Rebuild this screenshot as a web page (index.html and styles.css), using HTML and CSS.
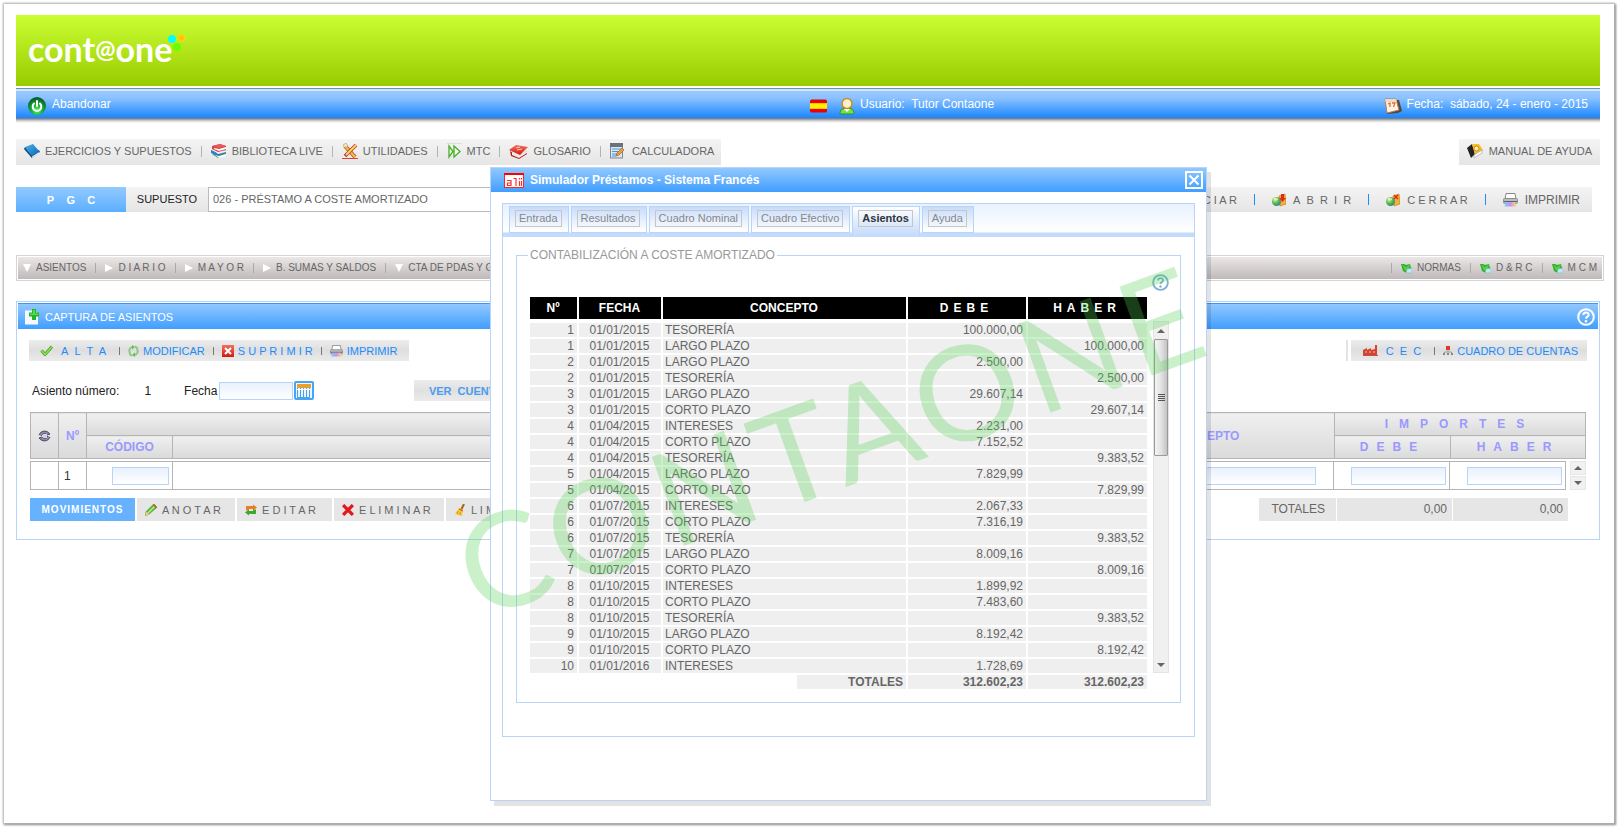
FILE: index.html
```html
<!DOCTYPE html>
<html lang="es">
<head>
<meta charset="utf-8">
<title>Contaone</title>
<link rel="stylesheet" href="styles.css">
</head>
<body>
<svg class="defs" aria-hidden="true">
  <defs>
    <radialGradient id="gPower" cx=".5" cy=".75" r=".7"><stop offset="0" stop-color="#4dff5c"/><stop offset=".5" stop-color="#16a535"/><stop offset="1" stop-color="#075c2a"/></radialGradient>
    <linearGradient id="gBlue" x1="0" y1="0" x2="1" y2="1"><stop offset="0" stop-color="#44b4ee"/><stop offset="1" stop-color="#1268b4"/></linearGradient>
    <linearGradient id="gInk"><stop offset="0" stop-color="#6ad5f5"/><stop offset=".5" stop-color="#d38cf0"/><stop offset="1" stop-color="#ffe16b"/></linearGradient>
    <linearGradient id="gRed" x1="0" y1="0" x2="0" y2="1"><stop offset="0" stop-color="#f0705e"/><stop offset="1" stop-color="#d4190f"/></linearGradient>
    <radialGradient id="gGlobe" cx=".35" cy=".3" r=".8"><stop offset="0" stop-color="#d9f6b4"/><stop offset=".5" stop-color="#62b840"/><stop offset="1" stop-color="#1b78b8"/></radialGradient>
  </defs>
  <symbol id="power" viewBox="0 0 18 18"><circle cx="9" cy="9" r="9" fill="url(#gPower)"/><path d="M6 6.500a4.300 4.300 0 1 0 6 0" fill="none" stroke="#fff" stroke-width="2" stroke-linecap="round"/><path d="M9 4v5" stroke="#fff" stroke-width="2" stroke-linecap="round"/></symbol>
  <symbol id="flag" viewBox="0 0 18 14"><rect width="18" height="14" rx="2" fill="#e00"/><rect y="4" width="18" height="6" fill="#fff000"/></symbol>
  <symbol id="user" viewBox="0 0 16 18"><path d="M1 17c0-5 3-6 7-6s7 1 7 6z" fill="#7ddc4a" stroke="#1e9a28"/><path d="M5 12l3 3 3-3z" fill="#fff"/><circle cx="8" cy="6.500" r="5" fill="#fdf0cc" stroke="#c98c22" stroke-width="1.500"/></symbol>
  <symbol id="calday" viewBox="0 0 18 18"><path d="M4 3l11 0 3 11-4 2L3 17z" fill="#56473e"/><path d="M1 2l11 0 3 11-12 3z" fill="#fff3e6" stroke="#b27c55"/><path d="M1 2l11 0 1 3H1.500z" fill="#e8dccf"/><path d="M4 7l2-1v4M8 6h3L9.500 10" fill="none" stroke="#e86b28" stroke-width="1.300"/></symbol>
  <symbol id="book" viewBox="0 0 16 16"><path d="M0 5l8 10 8-6-1-2-8 5z" fill="#135c9f"/><path d="M2 8l6 5.500L15 9v1.500L8 15z" fill="#d7e8f3"/><path d="M1 4L9 1l6 7-7 5z" fill="url(#gBlue)"/><path d="M1 4l7 9v2L0 6z" fill="#0e4d8b"/></symbol>
  <symbol id="books" viewBox="0 0 16 16"><path d="M1 11l6 4 8-3V9z" fill="#37a06b"/><path d="M3 11l5 2 7-2v2l-7 2z" fill="#fff"/><path d="M0 7l7 3 8-3v3l-8 3-7-3z" fill="#2f7fc4"/><path d="M2 7l5 2 8-2v2l-8 2z" fill="#eee"/><path d="M1 3l8-2 6 2v4L7 9 1 6z" fill="#dc4045"/><path d="M3 5l5 1 7-2v2L8 8 3 6z" fill="#fff"/><path d="M2 3l7-2 6 2-7 2z" fill="#e7595b"/></symbol>
  <symbol id="tools" viewBox="0 0 16 16"><path d="M3 3l10 11" stroke="#a55b1a" stroke-width="4"/><path d="M2.500 2.500L13 14" stroke="#f4b655" stroke-width="2.500"/><path d="M14 2L3 13" stroke="#b63a28" stroke-width="3.500"/><path d="M14 2L4 12" stroke="#ffcf67" stroke-width="2"/><path d="M1 2l3-2 2 3-3 2z" fill="#f4e4c4" stroke="#b98140" stroke-width=".500"/><path d="M0 15.500h16" stroke="#e43b3b"/></symbol>
  <symbol id="ffwd" viewBox="0 0 15 16"><path d="M0 .500h15" stroke="#ddd"/><path d="M2 3v11l4-5.500zM7 3v11l6-5.500z" fill="#f3ffe9" stroke="#45ad27" stroke-width="1.300"/></symbol>
  <symbol id="redbook" viewBox="0 0 19 16"><path d="M1 8l9 6 8-6v3l-8 5-8-3z" fill="#b81d1d"/><path d="M3 9l7 4 8-5v2l-8 5-7-3z" fill="#f1eaea"/><path d="M0 7l7-5 12 2-8 8z" fill="url(#gRed)"/><path d="M7 5l4-1M8 7l5-1" stroke="#ffc7be"/></symbol>
  <symbol id="calc" viewBox="0 0 14 16"><rect x=".5" y=".5" width="12" height="14.500" fill="#d8e7f5" stroke="#7a8795"/><rect x="0" y="0" width="13" height="4" fill="#68727c"/><path d="M2 6h9M2 8.500h9M2 11h6M2 13h4" stroke="#5c91d0"/><path d="M6 13l1-3 5-5 2 2-5 5z" fill="#eda13f" stroke="#9f5d1b" stroke-width=".700"/></symbol>
  <symbol id="manual" viewBox="0 0 16 16"><path d="M0 5l5-4 3 10-4 4z" fill="#222"/><path d="M5 1l7 0 4 6-8 5z" fill="#f7be2e"/><path d="M7 12l8-5v3l-8 5z" fill="#fff" stroke="#888" stroke-width=".5"/><circle cx="9.500" cy="5.500" r="2.500" fill="#fff1b8" stroke="#c88400"/></symbol>
  <symbol id="globe" viewBox="0 0 14 14"><path d="M7 3l6-2 1 10-6 2z" fill="#f5b12f" stroke="#b87812" stroke-width=".6"/><circle cx="4.500" cy="8.500" r="4.500" fill="url(#gGlobe)"/><path d="M2 6c2-1 3 1 4 0" stroke="#fff" fill="none"/></symbol>
  <symbol id="globe-open" viewBox="0 0 14 14"><use href="#globe" width="14" height="14"/><path d="M9 1h3v4h2l-3.500 4L7 5h2z" fill="#e02b1c"/></symbol>
  <symbol id="globe-close" viewBox="0 0 14 14"><use href="#globe" width="14" height="14"/><path d="M8 2l4 4M12 2L8 6" stroke="#e02b1c" stroke-width="1.500"/></symbol>
  <symbol id="printer" viewBox="0 0 15 14"><path d="M3 .500h9l1 6H2z" fill="#fff" stroke="#888"/><rect x=".5" y="5.500" width="14" height="5" rx="1" fill="#b9bdc2" stroke="#8c9196"/><path d="M1 8.500h13" stroke="#5d6267"/><path d="M3 9h9l1.500 4.500h-12z" fill="url(#gInk)"/></symbol>
  <symbol id="flagmap" viewBox="0 0 11 11"><path d="M0 1h3l2 1 4-1 1 4-1 3-4 1.500L2 8z" fill="#2eaa2a"/><path d="M1 1l4 3 4-3-1 4-4 3z" fill="#4fd23d"/><path d="M6 6l5-1v5H5z" fill="#bfe8f3" stroke="#76b4c8" stroke-width=".6"/></symbol>
  <symbol id="newdoc" viewBox="0 0 14 16"><path d="M0 1.500h10L13 5v10.500H0z" fill="#f6faff"/><path d="M7 0h4v3.500h3v4h-3V11H7V7.500H4v-4h3z" fill="#20b52a"/><path d="M8 1h2v3.500h3v1.500H5V4.500h3z" fill="#59da4e"/></symbol>
  <symbol id="check" viewBox="0 0 13 11"><path d="M1.500 5.500l3.500 4 7-8" fill="none" stroke="#3f9f1d" stroke-width="3"/><path d="M1.500 5.500l3.500 4 7-8" fill="none" stroke="#97df59" stroke-width="1.500"/></symbol>
  <symbol id="refresh" viewBox="0 0 11 12"><path d="M2 8C0 4 3 2 5 2M9 4c2 4-1 6-3 6M7 1.500C9 2 9 3 9.500 4M4 10.500C2 10 2 9 1.500 8" fill="none" stroke="#8bcb7c" stroke-width="2"/><path d="M4 0l3 2-3 2.500zM7 7.500V12L4 10z" fill="#69ba59"/></symbol>
  <symbol id="redx" viewBox="0 0 12 12"><rect width="12" height="12" fill="url(#gRed)"/><path d="M3 3l6 6M9 3L3 9" stroke="#fff" stroke-width="2"/></symbol>
  <symbol id="factory" viewBox="0 0 15 11"><path d="M0 10V5l4-2v2l4-2v2l4-1V0h2v10z" fill="#d34431"/><path d="M2 7h2M6 7h2M10 7h2" stroke="#ffb9a6"/><path d="M0 10.500h15" stroke="#b5574b"/></symbol>
  <symbol id="tree" viewBox="0 0 10 9"><rect x="3" y="0" width="4" height="4" fill="#e3342c"/><path d="M5 4v2M1.500 7V6h7v1" stroke="#999" fill="none"/><path d="M0 7h2v2H0zM4 7h2v2H4zM8 7h2v2H8z" fill="#888"/></symbol>
  <symbol id="cal" viewBox="0 0 20 19"><rect x="1" y="1" width="18" height="17" rx="1" fill="#eaf6ff" stroke="#45a5f8" stroke-width="2"/><path d="M3 3h14v4H3z" fill="#e9a02d"/><path d="M3.500 7v9M6.500 7v9M9.500 7v9M12.500 7v9M15.500 7v9M3 16.500h13" stroke="#4aa1e8"/><path d="M3 8.500h13" stroke="#fff"/></symbol>
  <symbol id="spin" viewBox="0 0 13 12"><path d="M1 5c2-5 8-5 11-1l-3 1c-2-2-4-2-6 1M12 7c-2 5-8 5-11 1l3-1c2 2 4 2 6-1" fill="#8e8aa8" stroke="#4b475f"/><path d="M5 4h4v4H5z" fill="#d4d1e2"/></symbol>
  <symbol id="pencil" viewBox="0 0 11 11"><path d="M0 11l1-4 7-7 3 3-7 6z" fill="#56b93a" stroke="#377f24" stroke-width=".5"/><path d="M2 8l6-6 1 1-6 6z" fill="#b7ed82"/><path d="M7.500.5L8.500 0 11 3l-1 .7z" fill="#ea4c2a"/><path d="M0 11l1-4 2.500 2.500z" fill="#f5cd85"/></symbol>
  <symbol id="edit" viewBox="0 0 12 11"><path d="M1 6V1.500h7V0l4 3-4 3V4.500H4V6z" fill="#eb7d29"/><path d="M11 5v4.500H4V11L0 8l4-3v1.500h4V5z" fill="#3eaa2d"/></symbol>
  <symbol id="cross" viewBox="0 0 11 11"><path d="M1 1l9 9M10 1L1 10" stroke="#e3181b" stroke-width="3"/></symbol>
  <symbol id="broom" viewBox="0 0 10 12"><path d="M9 0L6 6" stroke="#a8641c" stroke-width="2"/><path d="M4 4l4 2-1 6-7-2z" fill="#f5c738"/><path d="M4 5l4 2" stroke="#d34a20"/><path d="M3 7l-1 3M5 8v3" stroke="#bd8b16" stroke-width=".7"/></symbol>
  <symbol id="help" viewBox="0 0 18 18"><circle cx="9" cy="9" r="7.800" fill="none" stroke="currentColor" stroke-width="2"/><path d="M6.300 7c0-3.500 5.600-3.400 5.400-.1C11.600 8.700 9 8.500 9 10.700" fill="none" stroke="currentColor" stroke-width="2"/><circle cx="9" cy="13.300" r="1.300" fill="currentColor"/></symbol>
  <symbol id="close" viewBox="0 0 18 18"><rect x="1" y="1" width="16" height="16" fill="none" stroke="#fff" stroke-width="2"/><path d="M4.500 4.500l9 9M13.500 4.500l-9 9" stroke="#fff" stroke-width="2"/></symbol>
  <symbol id="app" viewBox="0 0 20 15"><rect x=".5" y=".5" width="19" height="14" fill="#fff" stroke="#f22"/><path d="M0 1h20" stroke="#f00" stroke-width="2"/><path d="M3 7.500h4v5H3.500V10H7M9.500 5.500H12V13M15.500 8v5M17.500 8v5M15.500 5v1.500M17.500 5v1.500" fill="none" stroke="#e33" stroke-width="1.200"/></symbol>
</svg>

<div class="page">
  <header class="banner">
    <div class="logo">cont<span class="logo-at">@</span>one<svg class="dots" viewBox="0 0 20 18"><circle cx="5" cy="6" r="4" fill="#0ff"/><circle cx="14.500" cy="5" r="3.500" fill="#ffc800" stroke="#ffd93b" stroke-dasharray="2 1"/><circle cx="10" cy="14" r="4" fill="#6f0"/></svg></div>
  </header>

  <div class="userbar">
    <a class="quit" href="#"><svg class="i18"><use href="#power"/></svg><span>Abandonar</span></a>
    <div class="who"><svg class="flag"><use href="#flag"/></svg><svg class="i16x18"><use href="#user"/></svg><span>Usuario:&nbsp; Tutor Contaone</span></div>
    <div class="date"><svg class="i18"><use href="#calday"/></svg><span>Fecha:&nbsp; sábado, 24 - enero - 2015</span></div>
  </div>

  <div class="row tools-row">
    <nav class="bar mainbar">
      <a href="#"><svg class="i16"><use href="#book"/></svg>EJERCICIOS Y SUPUESTOS</a><i></i>
      <a href="#"><svg class="i16"><use href="#books"/></svg>BIBLIOTECA LIVE</a><i></i>
      <a href="#"><svg class="i16"><use href="#tools"/></svg>UTILIDADES</a><i></i>
      <a href="#"><svg class="i15x16"><use href="#ffwd"/></svg>MTC</a><i></i>
      <a href="#"><svg class="i19"><use href="#redbook"/></svg>GLOSARIO</a><i></i>
      <a href="#" class="wide"><svg class="i14x16"><use href="#calc"/></svg>CALCULADORA</a>
    </nav>
    <nav class="bar manualbar"><a href="#"><svg class="i16"><use href="#manual"/></svg>MANUAL DE AYUDA</a></nav>
  </div>

  <div class="row case-row">
    <button class="pgc" type="button">P&nbsp;&nbsp;&nbsp; G&nbsp;&nbsp;&nbsp; C</button>
    <label class="case-label" for="case">SUPUESTO</label>
    <input class="case-input" id="case" value="026 - PRÉSTAMO A COSTE AMORTIZADO">
    <nav class="bar actions">
      <a href="#">I N I C I A R</a><i></i>
      <a href="#"><svg class="i14"><use href="#globe-open"/></svg>A&nbsp; B&nbsp; R&nbsp; I&nbsp; R</a><i></i>
      <a href="#"><svg class="i14"><use href="#globe-close"/></svg>C E R R A R</a><i></i>
      <a href="#" class="print"><svg class="i15"><use href="#printer"/></svg>IMPRIMIR</a>
    </nav>
  </div>

  <nav class="menu"><div class="menu-in">
    <a href="#"><b class="down"></b>ASIENTOS</a><i></i>
    <a href="#"><b class="right"></b>D I A R I O</a><i></i>
    <a href="#"><b class="right"></b>M A Y O R</a><i></i>
    <a href="#"><b class="right"></b>B. SUMAS Y SALDOS</a><i></i>
    <a href="#"><b class="down"></b>CTA DE PDAS Y G</a>
    <span class="grow"></span><i></i>
    <a href="#"><svg class="i11"><use href="#flagmap"/></svg>NORMAS</a><i></i>
    <a href="#"><svg class="i11"><use href="#flagmap"/></svg>D &amp; R C</a><i></i>
    <a href="#"><svg class="i11"><use href="#flagmap"/></svg>M C M</a>
  </div></nav>

  <section class="panel">
    <div class="panel-title"><svg class="i14x16"><use href="#newdoc"/></svg><span>CAPTURA DE ASIENTOS</span><button type="button" class="icon-btn" aria-label="Ayuda"><svg class="i18"><use href="#help"/></svg></button></div>
    <div class="panel-body">
      <div class="row">
        <div class="cmds cmds-left">
          <a href="#"><svg class="i13x11"><use href="#check"/></svg><span class="padded">A&nbsp; L&nbsp; T&nbsp; A</span></a><i></i>
          <a href="#"><svg class="i11x12"><use href="#refresh"/></svg>MODIFICAR</a><i></i>
          <a href="#"><svg class="i12"><use href="#redx"/></svg>S U P R I M I R</a><i></i>
          <a href="#"><svg class="i13"><use href="#printer"/></svg>IMPRIMIR</a>
        </div>
        <div class="row cmds-end"><span class="sliver"></span>
        <div class="cmds cmds-right">
          <a href="#"><svg class="i15x11"><use href="#factory"/></svg><span class="padded">C&nbsp; E&nbsp; C</span></a><i></i>
          <a href="#"><svg class="i10x9"><use href="#tree"/></svg>CUADRO DE CUENTAS</a>
        </div></div>
      </div>
      <div class="entry-row">
        <span>Asiento número:</span><span class="num">1</span>
        <label for="fecha">Fecha</label><input id="fecha" class="field date-field"><button type="button" class="icon-btn" aria-label="Calendario"><svg class="cal"><use href="#cal"/></svg></button>
        <button type="button" class="see">VER&nbsp; CUENTAS</button>
      </div>

      <table class="grid head">
        <colgroup><col class="c28"><col class="c28"><col class="c86"><col><col class="c258"><col class="c116"><col class="c135"></colgroup>
        <tr><th rowspan="2"><svg class="i13"><use href="#spin"/></svg></th><th rowspan="2">Nº</th><th colspan="2"></th><th rowspan="2">CONCEPTO</th><th colspan="2" class="sp11">IMPORTES</th></tr>
        <tr><th>CÓDIGO</th><th></th><th class="sp8">DEBE</th><th class="sp8">HABER</th></tr>
      </table>
      <div class="line-row">
        <table class="grid line">
          <colgroup><col class="c28"><col class="c28"><col class="c86"><col><col class="c258"><col class="c116"><col class="c116"></colgroup>
          <tr><td></td><td class="n">1</td><td><input class="field f57" aria-label="Código"></td><td></td><td class="concept"><input class="field f230" aria-label="Concepto"></td><td><input class="field f95" aria-label="Debe"></td><td><input class="field f95" aria-label="Haber"></td></tr>
        </table>
        <div class="updown"><button type="button" aria-label="Subir"><b class="tri-up"></b></button><button type="button" aria-label="Bajar"><b class="tri-dn"></b></button></div>
      </div>
      <div class="foot">
        <div class="moves">
          <button type="button" class="mov">MOVIMIENTOS</button>
          <button type="button" class="act w98"><svg class="i12"><use href="#pencil"/></svg>A N O T A R</button>
          <button type="button" class="act w95"><svg class="i12"><use href="#edit"/></svg>E D I T A R</button>
          <button type="button" class="act w110"><svg class="i12"><use href="#cross"/></svg>E L I M I N A R</button>
          <button type="button" class="act w98"><svg class="i12"><use href="#broom"/></svg>L I M P I A R</button>
        </div>
        <div class="totals"><span class="w77">TOTALES</span><span class="w115">0,00</span><span class="w115">0,00</span></div>
      </div>
    </div>
  </section>
</div>

<section class="dialog" role="dialog" aria-label="Simulador Préstamos">
  <div class="dlg-title"><svg class="app"><use href="#app"/></svg><h2>Simulador Préstamos - Sistema Francés</h2><button type="button" class="icon-btn" aria-label="Cerrar"><svg class="i18"><use href="#close"/></svg></button></div>
  <div class="tabbox">
    <div class="tabs">
      <div class="tab"><button type="button">Entrada</button></div>
      <div class="tab"><button type="button">Resultados</button></div>
      <div class="tab"><button type="button">Cuadro Nominal</button></div>
      <div class="tab"><button type="button">Cuadro Efectivo</button></div>
      <div class="tab on"><button type="button">Asientos</button></div>
      <div class="tab"><button type="button">Ayuda</button></div>
    </div>
    <fieldset>
      <legend>CONTABILIZACIÓN A COSTE AMORTIZADO</legend>
      <div class="help-row"><button type="button" class="icon-btn help" aria-label="Ayuda"><svg class="i17"><use href="#help"/></svg></button></div>
      <div class="list">
        <table class="data">
          <colgroup><col class="k47"><col class="k82"><col><col class="k118"><col class="k119"></colgroup>
          <thead><tr><th>Nº</th><th>FECHA</th><th>CONCEPTO</th><th class="sp5">DEBE</th><th class="sp5">HABER</th></tr></thead>
          <tbody>
            <tr><td>1</td><td>01/01/2015</td><td>TESORERÍA</td><td>100.000,00</td><td></td></tr>
            <tr><td>1</td><td>01/01/2015</td><td>LARGO PLAZO</td><td></td><td>100.000,00</td></tr>
            <tr><td>2</td><td>01/01/2015</td><td>LARGO PLAZO</td><td>2.500,00</td><td></td></tr>
            <tr><td>2</td><td>01/01/2015</td><td>TESORERÍA</td><td></td><td>2.500,00</td></tr>
            <tr><td>3</td><td>01/01/2015</td><td>LARGO PLAZO</td><td>29.607,14</td><td></td></tr>
            <tr><td>3</td><td>01/01/2015</td><td>CORTO PLAZO</td><td></td><td>29.607,14</td></tr>
            <tr><td>4</td><td>01/04/2015</td><td>INTERESES</td><td>2.231,00</td><td></td></tr>
            <tr><td>4</td><td>01/04/2015</td><td>CORTO PLAZO</td><td>7.152,52</td><td></td></tr>
            <tr><td>4</td><td>01/04/2015</td><td>TESORERÍA</td><td></td><td>9.383,52</td></tr>
            <tr><td>5</td><td>01/04/2015</td><td>LARGO PLAZO</td><td>7.829,99</td><td></td></tr>
            <tr><td>5</td><td>01/04/2015</td><td>CORTO PLAZO</td><td></td><td>7.829,99</td></tr>
            <tr><td>6</td><td>01/07/2015</td><td>INTERESES</td><td>2.067,33</td><td></td></tr>
            <tr><td>6</td><td>01/07/2015</td><td>CORTO PLAZO</td><td>7.316,19</td><td></td></tr>
            <tr><td>6</td><td>01/07/2015</td><td>TESORERÍA</td><td></td><td>9.383,52</td></tr>
            <tr><td>7</td><td>01/07/2015</td><td>LARGO PLAZO</td><td>8.009,16</td><td></td></tr>
            <tr><td>7</td><td>01/07/2015</td><td>CORTO PLAZO</td><td></td><td>8.009,16</td></tr>
            <tr><td>8</td><td>01/10/2015</td><td>INTERESES</td><td>1.899,92</td><td></td></tr>
            <tr><td>8</td><td>01/10/2015</td><td>CORTO PLAZO</td><td>7.483,60</td><td></td></tr>
            <tr><td>8</td><td>01/10/2015</td><td>TESORERÍA</td><td></td><td>9.383,52</td></tr>
            <tr><td>9</td><td>01/10/2015</td><td>LARGO PLAZO</td><td>8.192,42</td><td></td></tr>
            <tr><td>9</td><td>01/10/2015</td><td>CORTO PLAZO</td><td></td><td>8.192,42</td></tr>
            <tr><td>10</td><td>01/01/2016</td><td>INTERESES</td><td>1.728,69</td><td></td></tr>
          </tbody>
          <tfoot><tr><td colspan="3" class="tot"><span>TOTALES</span></td><td>312.602,23</td><td>312.602,23</td></tr></tfoot>
        </table>
        <div class="scroll"><b class="tri-up"></b><div class="thumb"><span></span><span></span><span></span><span></span></div><b class="tri-dn"></b></div>
      </div>
    </fieldset>
  </div>
</section>
<div class="watermark">CONTAONE</div>
</body>
</html>
```
FILE: styles.css
```css
* { box-sizing: border-box; }
html, body { height: 100%; }
body {
  margin: 0;
  padding: 4px 5px 5px 4px;
  position: relative;
  overflow: hidden;
  background: #fff;
  color: #666;
  font: 11px/14px "Liberation Sans", Arial, sans-serif;
}
a { color: inherit; text-decoration: none; white-space: nowrap; }
button, input { font: inherit; color: inherit; margin: 0; }
button { border: 0; background: none; padding: 0; white-space: nowrap; }
svg { display: block; flex: none; }
.defs { position: absolute; width: 0; height: 0; }
.i18 { width: 18px; height: 18px; }
.i17 { width: 17px; height: 17px; }
.i16 { width: 16px; height: 16px; }
.i15 { width: 15px; height: 14px; }
.i14 { width: 14px; height: 14px; }
.i13 { width: 13px; height: 12px; }
.i12 { width: 12px; height: 12px; }
.i11 { width: 11px; height: 11px; }
.i19 { width: 19px; height: 16px; }
.i16x18 { width: 16px; height: 18px; }
.i15x16 { width: 15px; height: 16px; }
.i14x16 { width: 14px; height: 16px; }
.i13x11 { width: 13px; height: 11px; }
.i11x12 { width: 11px; height: 12px; }
.i15x11 { width: 15px; height: 11px; }
.i10x9 { width: 10px; height: 9px; }
.flag { width: 17px; height: 14px; }
.app { width: 20px; height: 15px; }
.cal { width: 20px; height: 19px; }

.page {
  height: 100%;
  padding: 11px 14px 0 12px;
  background: #fff;
  box-shadow: 0 0 2px 1px #bbb, 1px 1px 2px 1px #888;
}
.banner {
  height: 71px;
  padding-left: 12px;
  background: linear-gradient(#cf3, #9c0);
}
.logo {
  display: flex;
  align-items: center;
  height: 68px;
  color: #fff;
  font: bold 34px/68px Lato, sans-serif;
}
.logo-at { font-size: 24px; }
.dots { width: 20px; height: 18px; margin: 0 0 14px -5px; }

.userbar {
  display: flex;
  align-items: center;
  margin-top: 2px;
  height: 35px;
  padding: 0 12px;
  color: #fff;
  font-size: 12px;
  background: linear-gradient(#5a96c3 0 1px, #d5e6f5 1px 3px, #99c9ff 3px, #8cc2ff 10px, #248cff 28px, #3b7fca 30px, #8e9196 31px, #d9d9d9 33px, #fff 35px);
}
.userbar > * { display: flex; align-items: center; }
.userbar span { padding-bottom: 3px; }
.quit { width: 50%; gap: 6px; }
.who { flex: 1; gap: 5px; padding-left: 2px; }
.who .flag { margin-right: 7px; }
.date { gap: 5px; }

.row { display: flex; justify-content: space-between; align-items: center; }
.tools-row { margin-top: 16px; }
.bar {
  display: flex;
  align-items: center;
  background: linear-gradient(#f4f4f4, #e5e5e5);
}
.bar a { display: flex; align-items: center; gap: 5px; }
.bar i { width: 1px; height: 11px; background: #b3b3b3; }
.mainbar { height: 26px; gap: 9px; padding: 0 7px 2px 8px; }
.mainbar .wide { gap: 8px; }
.manualbar { height: 26px; padding: 0 8px 2px; }
.manualbar a { gap: 6px; }

.case-row { margin: 22px 8px 0 0; height: 25px; align-items: stretch; }
.pgc { width: 110px; color: #fff; font-weight: bold; background: linear-gradient(#92caff, #5caeff); }
.case-label { width: 82px; line-height: 25px; text-align: center; color: #222; background: linear-gradient(#f4f4f4, #e5e5e5); }
.case-input { flex: 1; min-width: 0; padding: 0 4px 2px; background: #fff; border: 1px solid #bbb; }
.actions { gap: 17px; padding: 0 12px 0 16px; }
.actions a { gap: 7px; }
.actions i { background: #1a8cff; }
.actions .print { font-size: 12px; }

.menu { margin: 43px -4px 0 0; padding: 1px; border: 1px solid #d4d4d4; }
.menu-in {
  display: flex;
  align-items: center;
  gap: 9px;
  height: 22px;
  padding: 0 5px;
  font-size: 10px;
  background: linear-gradient(#ebe7e6, #bfbab9);
}
.menu a { display: flex; align-items: center; gap: 5px; }
.menu i { width: 1px; height: 10px; background: #aaa; }
.grow { flex: 1; }
.down { border: 4px solid transparent; border-top: 8px solid #fff; border-bottom: 0; }
.right { border: 4px solid transparent; border-left: 8px solid #fff; border-right: 0; }

.panel { margin-top: 20px; padding: 1px; border: 1px solid #b8d4f8; }
.panel-title {
  display: flex;
  align-items: center;
  gap: 6px;
  height: 26px;
  padding: 0 3px 0 7px;
  color: #fff;
  background: linear-gradient(#92c8ff, #409eff);
  border-top: 1px solid #3f97f0;
}
.panel-title span { flex: 1; }
.icon-btn { display: flex; color: inherit; }
.panel-body { padding: 11px 11px 17px; }
.cmds {
  display: flex;
  align-items: center;
  gap: 8px;
  height: 21px;
  color: #1a8cff;
  background: linear-gradient(#ececec, #dedede 50%, #ebebeb);
}
.cmds a { display: flex; align-items: center; gap: 4px; }
.cmds i { width: 1px; height: 8px; background: #777; }
.padded { padding: 0 5px 0 4px; }
.cmds-left { padding: 0 11px; }
.cmds-right { padding: 0 9px 0 12px; }
.cmds-end { gap: 3px; }
.sliver { width: 2px; height: 21px; background: #e4e4e4; }

.entry-row { display: flex; align-items: center; height: 21px; margin: 19px 0 11px; padding-left: 3px; color: #222; font-size: 12px; }
.num { margin: 0 33px 0 25px; }
.field { height: 18px; padding: 0 2px; border: 1px solid #b8d4f8; background: linear-gradient(#e8f1fd, #fff); }
.date-field { width: 74px; margin: 0 1px 0 2px; }
.see { width: 110px; height: 21px; margin-left: 100px; color: #4a9cf0; font: bold 11px "Liberation Sans", Arial, sans-serif; background: linear-gradient(#ececec, #e0e0e0 50%, #ebebeb); }

.grid { width: 100%; table-layout: fixed; border-collapse: collapse; margin-left: 1px; font-size: 12px; }
.head { width: calc(100% - 2px); }
.grid th { height: 23px; padding: 0; color: #99f; background: linear-gradient(#f0f0f0, #dadada); border: 1px solid #b5b5b5; }
.grid th svg { margin: 0 auto; }
.c28 { width: 28px; } .c86 { width: 86px; } .c258 { width: 258px; } .c116 { width: 116px; } .c135 { width: 135px; }
.sp11 { letter-spacing: 11px; }
.sp8 { letter-spacing: 8px; }
.sp5 { letter-spacing: 5px; }
.line-row { display: flex; gap: 4px; margin: 2px 1px 0 0; }
.line td { height: 27px; padding: 0 3px; text-align: right; border: 1px solid #b5b5b5; background: #fff; }
.line .n { text-align: left; color: #333; padding-left: 5px; }
.line .concept { padding-right: 17px; }
.line .field { display: inline-block; vertical-align: middle; }
.f57 { width: 57px; } .f95 { width: 95px; } .f230 { width: 230px; }
.updown { display: flex; flex-direction: column; gap: 1px; flex: none; }
.updown button { display: flex; align-items: center; justify-content: center; width: 16px; height: 14px; background: #f1f1f1; border: 1px solid #e6e6e6; }
.tri-up { border: 4px solid transparent; border-bottom: 4px solid #666; border-top: 0; }
.tri-dn { border: 4px solid transparent; border-top: 4px solid #666; border-bottom: 0; }

.foot { display: flex; justify-content: space-between; margin: 8px 19px 0 1px; }
.moves { display: flex; gap: 2px; }
.mov { width: 105px; height: 23px; color: #fff; font: bold 10px "Liberation Sans", Arial, sans-serif; letter-spacing: 1px; background: #66b2ff; }
.act { display: flex; align-items: center; gap: 5px; height: 23px; padding-left: 8px; background: #e6e6e6; }
.w98 { width: 98px; } .w95 { width: 95px; } .w110 { width: 110px; }
.totals { display: flex; gap: 1px; font-size: 12px; line-height: 23px; text-align: right; }
.totals span { background: #e6e6e6; padding-right: 5px; }
.totals .w77 { width: 77px; padding-right: 11px; }
.w115 { width: 115px; }

.dialog {
  position: absolute;
  top: 167px;
  left: 490px;
  width: 717px;
  padding-bottom: 63px;
  background: #fff;
  border: 1px solid #b8d4f8;
  box-shadow: 4px 5px 0 rgba(0, 0, 0, .11);
}
.dlg-title {
  display: flex;
  align-items: center;
  gap: 6px;
  height: 24px;
  padding: 0 3px 0 13px;
  color: #fff;
  background: linear-gradient(#92c8ff, #409eff);
}
.dlg-title h2 { flex: 1; margin: 0; font-size: 12px; line-height: 14px; }
.tabbox { margin: 11px 11px 0; padding-bottom: 33px; border: 1px solid #b8d4f8; }
.tabs {
  display: flex;
  gap: 2px;
  height: 33px;
  padding: 2px 6px 0;
  background: linear-gradient(#e8f1fd, #fff 28px, #c3dbfc 29px);
}
.tab { height: 27px; padding: 3px 6px 0 5px; background: linear-gradient(#c7dcfc, #fff 24px); border: 1px solid #b8d4f8; }
.tab button { height: 17px; padding: 0 3px; color: #888; line-height: 15px; border: 1px solid #c6c6c6; }
.on { height: 30px; background: linear-gradient(#fff, #c3dbfc); border-bottom: 0; }
.on button { color: #333; font-weight: bold; }

fieldset { margin: 10px 13px 0; padding: 0 11px 11px; border: 1px solid #b8d4f8; min-width: 0; }
legend { padding: 0 2px; color: #999; font-size: 12px; line-height: 16px; }
.help-row { display: flex; justify-content: flex-end; height: 32px; padding: 11px 0 0 0; }
.help { color: #7fb0d6; }
.list { display: flex; }
.data { flex: 1; table-layout: fixed; width: 100%; border-collapse: separate; border-spacing: 2px; font-size: 12px; line-height: 14px; }
.data th, .data td { padding: 0 3px 0 2px; height: 14px; }
.data th { height: 24px; color: #fff; background: #000; background-clip: padding-box; border-bottom: 2px solid transparent; }
.data td { background: #efefef; text-align: right; }
.data tbody td:nth-child(2) { text-align: center; }
.data tbody td:nth-child(3) { text-align: left; }
.data tfoot td { font-weight: bold; }
.data .tot { background: none; padding: 0; }
.tot span { display: block; width: 109px; margin-left: auto; padding-right: 3px; background: #efefef; }
.k47 { width: 47px; } .k82 { width: 82px; } .k118 { width: 118px; } .k119 { width: 119px; }
.scroll {
  display: flex;
  flex-direction: column;
  align-items: center;
  width: 16px;
  margin: 26px 0 18px 4px;
  padding: 7px 0 5px;
  background: #f0f0f0;
  border: 1px solid #e4e4e4;
}
.thumb {
  display: flex;
  flex-direction: column;
  justify-content: center;
  align-items: center;
  gap: 1px;
  width: 14px;
  height: 117px;
  margin: 6px 0 auto;
  border: 1px solid #999;
  border-radius: 1px;
  background: linear-gradient(90deg, #f4f4f4, #e3e3e3 50%, #c4c4c8);
}
.thumb span { width: 7px; height: 1px; background: #555; }

.watermark {
  position: absolute;
  top: 354px;
  left: 438px;
  color: rgba(80, 208, 80, .3);
  font: 132px/168px Lato, sans-serif;
  letter-spacing: 7px;
  transform: rotate(-20deg);
  pointer-events: none;
}
```
